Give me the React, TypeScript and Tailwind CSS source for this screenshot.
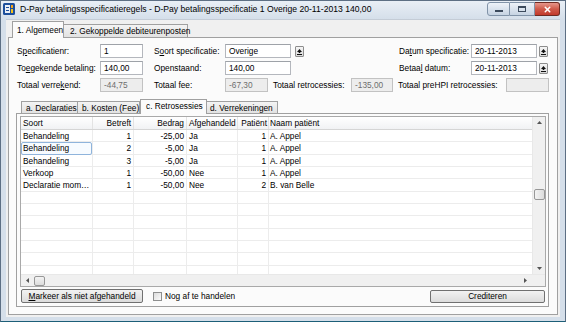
import { X } from "lucide-react";

type Row = [string, string, string, string, string, string];

const rows: Row[] = [
  ["Behandeling", "1", "-25,00", "Ja", "1", "A. Appel"],
  ["Behandeling", "2", "-5,00", "Ja", "1", "A. Appel"],
  ["Behandeling", "3", "-5,00", "Ja", "1", "A. Appel"],
  ["Verkoop", "1", "-50,00", "Nee", "1", "A. Appel"],
  ["Declaratie mom…", "1", "-50,00", "Nee", "2", "B. van Belle"],
];

const emptyRows = Array.from({ length: 8 }, (_, i) => i);

function TextBox({ value, width, disabled }: { value: string; width: string; disabled?: boolean }) {
  return (
    <div
      className={
        disabled
          ? `${width} h-[14px] border border-[#c2c2c2] bg-[#ededed] pl-[3px] leading-[12px] text-[#6d6d6d]`
          : `${width} h-[14px] border border-[#b4b7bd] border-t-[#9ea2a8] bg-white pl-[3px] leading-[12px]`
      }
    >
      {value}
    </div>
  );
}

function PickButton() {
  return (
    <div className="w-[9px] h-[11px] mt-[2px] border border-[#8d8d8d] rounded-[1px] bg-gradient-to-b from-[#f6f6f6] to-[#d9d9d9] flex items-center justify-center">
      <svg width="5" height="6" viewBox="0 0 5 6">
        <path d="M2.5 0 L5 3 L3.3 3 L3.3 4 L1.7 4 L1.7 3 L0 3 Z" fill="#111" />
        <rect x="0" y="5" width="5" height="1" fill="#111" />
      </svg>
    </div>
  );
}

function GridRow({ cells, focus }: { cells: Row; focus?: boolean }) {
  return (
    <div className="flex h-[12.35px] shrink-0 leading-[12px] border-b border-[#ececec]">
      <div className="w-[72px] border-r border-[#ececec] pl-[2px] relative">
        {focus && (
          <div className="absolute inset-x-0 top-0 bottom-[-1px] border border-[#8fb4dc] rounded-[2px] bg-[#f7fbff]" />
        )}
        <span className="relative">{cells[0]}</span>
      </div>
      <div className="w-[41px] border-r border-[#ececec] pr-[2px] text-right">{cells[1]}</div>
      <div className="w-[53px] border-r border-[#ececec] pr-[2px] text-right">{cells[2]}</div>
      <div className="w-[51px] border-r border-[#ececec] pl-[2px]">{cells[3]}</div>
      <div className="w-[31px] border-r border-[#ececec] pr-[2px] text-right">{cells[4]}</div>
      <div className="w-[263px] pl-[1px]">{cells[5]}</div>
    </div>
  );
}

export default function App() {
  return (
    <div className="w-[566px] h-[322px] overflow-hidden whitespace-nowrap bg-[#d5dfea] border border-[#5d6f84] border-b-[#1d5f78] flex flex-col font-['Liberation_Sans',Arial,sans-serif] text-[8.3px] text-black">
      {/* title bar */}
      <div className="h-[18px] flex items-start bg-gradient-to-b from-[#e9eff6] to-[#d5dfea]">
        <svg className="ml-[2px] mt-[2px]" width="12" height="12" viewBox="0 0 12 12">
          <rect x="0" y="0" width="12" height="12" rx="1.5" fill="#1d4f9c" />
          <rect x="2" y="2" width="5" height="8" fill="#e9eef6" />
          <rect x="8" y="2" width="2" height="3" fill="#f3a21b" />
          <rect x="8" y="6" width="2" height="4" fill="#f3c21b" />
          <rect x="3" y="4" width="3" height="1" fill="#1d4f9c" />
          <rect x="3" y="7" width="3" height="1" fill="#1d4f9c" />
        </svg>
        <div className="ml-[5px] mt-[2px] text-[8.6px] leading-[12px]">
          D-Pay betalingsspecificatieregels - D-Pay betalingsspecificatie 1 Overige 20-11-2013 140,00
        </div>
        <div className="ml-auto mr-[5px] mt-[1px] flex">
          <div className="w-[23px] h-[14px] border border-[#8193a8] rounded-l-[3px] bg-gradient-to-b from-[#eef3f9] to-[#c6d3e2] flex items-center justify-center">
            <div className="w-[8px] h-[2px] mt-[3px] bg-[#3c4a5c]" />
          </div>
          <div className="w-[25px] h-[14px] border-y border-r border-[#8193a8] bg-gradient-to-b from-[#eef3f9] to-[#c6d3e2] flex items-center justify-center">
            <div className="w-[8px] h-[6px] border border-[#3c4a5c] border-t-2" />
          </div>
          <div className="w-[25px] h-[14px] border-y border-r border-[#6e2a22] rounded-r-[3px] bg-gradient-to-b from-[#e6968b] via-[#cf5a4b] to-[#c2392b] flex items-center justify-center">
            <X className="w-[9px] h-[9px] text-white" strokeWidth={4} />
          </div>
        </div>
      </div>

      {/* client area */}
      <div className="mx-[5px] mb-[4px] flex-1 bg-[#f0f0f0] border-t border-[#c4ccd6] pl-[2px] pt-[1px]">
        {/* main tabs */}
        <div className="flex items-end h-[16px] pl-[4px]">
          <div className="h-[17px] w-[52px] border border-b-0 border-[#a0a0a0] bg-[#fbfbfb] pl-[4px] pt-[3px] leading-[10px] relative top-[1px]">
            1. Algemeen
          </div>
          <div className="h-[13px] w-[124px] border border-l-0 border-b-0 border-[#a0a0a0] bg-gradient-to-b from-[#f4f4f4] to-[#e2e2e2] pl-[6px] leading-[12px]">
            2. Gekoppelde debiteurenposten
          </div>
        </div>

        {/* main tab panel */}
        <div className="w-[550px] h-[278px] border border-[#a0a0a0] bg-[#fbfbfb] flex flex-col">
          <div className="flex flex-col gap-[3px] pt-[6px] pl-[8px]">
            <div className="flex h-[14px] leading-[14px]">
              <div className="w-[83px]">
                S<span className="underline">p</span>ecificatienr:
              </div>
              <TextBox value="1" width="w-[43px]" />
              <div className="w-[71px] ml-[11px]">
                S<span className="underline">o</span>ort specificatie:
              </div>
              <TextBox value="Overige" width="w-[66px]" />
              <div className="ml-[4px]">
                <PickButton />
              </div>
              <div className="w-[72px] ml-[95px]">
                Da<span className="underline">t</span>um specificatie:
              </div>
              <TextBox value="20-11-2013" width="w-[66px]" />
              <div className="ml-[2px]">
                <PickButton />
              </div>
            </div>
            <div className="flex h-[14px] leading-[14px]">
              <div className="w-[83px]">
                To<span className="underline">e</span>gekende betaling:
              </div>
              <TextBox value="140,00" width="w-[43px]" />
              <div className="w-[71px] ml-[11px]">Openstaand:</div>
              <TextBox value="140,00" width="w-[66px]" />
              <div className="w-[72px] ml-[108px]">
                Betaa<span className="underline">l</span> datum:
              </div>
              <TextBox value="20-11-2013" width="w-[66px]" />
              <div className="ml-[2px]">
                <PickButton />
              </div>
            </div>
            <div className="flex h-[14px] leading-[14px]">
              <div className="w-[83px]">
                Totaal verre<span className="underline">k</span>end:
              </div>
              <TextBox value="-44,75" width="w-[43px]" disabled />
              <div className="w-[71px] ml-[11px]">Totaal fee:</div>
              <TextBox value="-67,30" width="w-[43px]" disabled />
              <div className="w-[78px] ml-[5px]">Totaal retrocessies:</div>
              <TextBox value="-135,00" width="w-[42px]" disabled />
              <div className="w-[108px] ml-[5px]">Totaal preHPI retrocessies:</div>
              <TextBox value="" width="w-[43px]" disabled />
            </div>
          </div>

          {/* inner tabs */}
          <div className="flex items-end h-[14px] mt-[7px] ml-[12px]">
            <div className="h-[12px] w-[57px] border border-b-0 border-[#a0a0a0] bg-gradient-to-b from-[#f4f4f4] to-[#e2e2e2] pl-[4px] leading-[12px]">
              a. Declaraties
            </div>
            <div className="h-[12px] w-[62px] border border-l-0 border-b-0 border-[#a0a0a0] bg-gradient-to-b from-[#f4f4f4] to-[#e2e2e2] pl-[4px] leading-[12px]">
              b. Kosten (Fee)
            </div>
            <div className="h-[15px] w-[67px] border border-b-0 border-[#a0a0a0] bg-[#fbfbfb] pl-[5px] pt-[1px] leading-[10px] relative top-[1px]">
              c. Retrosessies
            </div>
            <div className="h-[12px] w-[71px] border border-l-0 border-b-0 border-[#a0a0a0] bg-gradient-to-b from-[#f4f4f4] to-[#e2e2e2] pl-[3px] leading-[12px]">
              d. Verrekeningen
            </div>
          </div>

          {/* inner tab panel */}
          <div className="ml-[7px] w-[533px] h-[194px] border border-[#a0a0a0] bg-[#fbfbfb] pl-[3px] pt-[2px] flex flex-col">
            <div className="w-[526px] h-[171px] border border-[#a9a9a9] bg-white flex flex-col">
              <div className="flex flex-1 min-h-0">
                <div className="w-[511px] flex flex-col overflow-hidden">
                  <div className="flex h-[13px] shrink-0 leading-[13px] bg-gradient-to-b from-[#ffffff] to-[#f1f2f4] border-b border-[#d5d5d5]">
                    <div className="w-[72px] border-r border-[#e3e3e3] pl-[2px]">Soort</div>
                    <div className="w-[41px] border-r border-[#e3e3e3] pr-[2px] text-right">Betreft</div>
                    <div className="w-[53px] border-r border-[#e3e3e3] pr-[2px] text-right">Bedrag</div>
                    <div className="w-[51px] border-r border-[#e3e3e3] pl-[2px] overflow-hidden">Afgehandeld</div>
                    <div className="w-[31px] border-r border-[#e3e3e3] pr-[1px] text-right overflow-hidden">Patiënt</div>
                    <div className="w-[263px] pl-[1px]">Naam patiënt</div>
                  </div>
                  {rows.map((r, i) => (
                    <GridRow key={i} cells={r} focus={i === 1} />
                  ))}
                  {emptyRows.map((i) => (
                    <GridRow key={`e${i}`} cells={["", "", "", "", "", ""]} />
                  ))}
                </div>
                {/* vertical scrollbar */}
                <div className="w-[13px] bg-[#f0f0f0] border-l border-[#e8e8e8] flex flex-col items-center">
                  <svg className="mt-[4px]" width="5" height="3" viewBox="0 0 5 3">
                    <path d="M0 3 L2.5 0 L5 3 Z" fill="#555" />
                  </svg>
                  <div className="mt-[65px] w-[11px] h-[11px] border border-[#979797] rounded-[2px] bg-gradient-to-r from-[#f3f3f3] to-[#dcdcdc]" />
                  <svg className="mt-auto mb-[4px]" width="5" height="3" viewBox="0 0 5 3">
                    <path d="M0 0 L5 0 L2.5 3 Z" fill="#555" />
                  </svg>
                </div>
              </div>
              {/* horizontal scrollbar */}
              <div className="h-[12px] flex bg-[#f0f0f0] border-t border-[#e8e8e8]">
                <div className="w-[511px] flex items-center">
                  <svg className="ml-[5px]" width="3" height="5" viewBox="0 0 3 5">
                    <path d="M3 0 L0 2.5 L3 5 Z" fill="#555" />
                  </svg>
                  <div className="ml-[5px] w-[11px] h-[10px] border border-[#979797] rounded-[2px] bg-gradient-to-b from-[#f3f3f3] to-[#dcdcdc]" />
                  <svg className="ml-auto mr-[5px]" width="3" height="5" viewBox="0 0 3 5">
                    <path d="M0 0 L3 2.5 L0 5 Z" fill="#555" />
                  </svg>
                </div>
                <div className="w-[13px] bg-[#f0f0f0]" />
              </div>
            </div>

            <div className="flex items-start mt-[2px] pl-[1px]">
              <div className="w-[122px] h-[14px] border border-[#707070] rounded-[2px] bg-gradient-to-b from-[#f2f2f2] to-[#dcdcdc] text-center leading-[12px]">
                <span className="underline">M</span>arkeer als niet afgehandeld
              </div>
              <div className="ml-[10px] mt-[3px] w-[9px] h-[9px] border border-[#8e8f8f] bg-gradient-to-br from-[#dcdcdc] to-[#fbfbfb]" />
              <div className="ml-[3px] mt-[1px] leading-[12px]">Nog af te handelen</div>
              <div className="ml-auto mr-[3px] mt-[1px] w-[115px] h-[13px] border border-[#707070] rounded-[2px] bg-gradient-to-b from-[#f2f2f2] to-[#dcdcdc] text-center leading-[11px]">
                Crediteren
              </div>
            </div>
          </div>
        </div>
      </div>
    </div>
  );
}
